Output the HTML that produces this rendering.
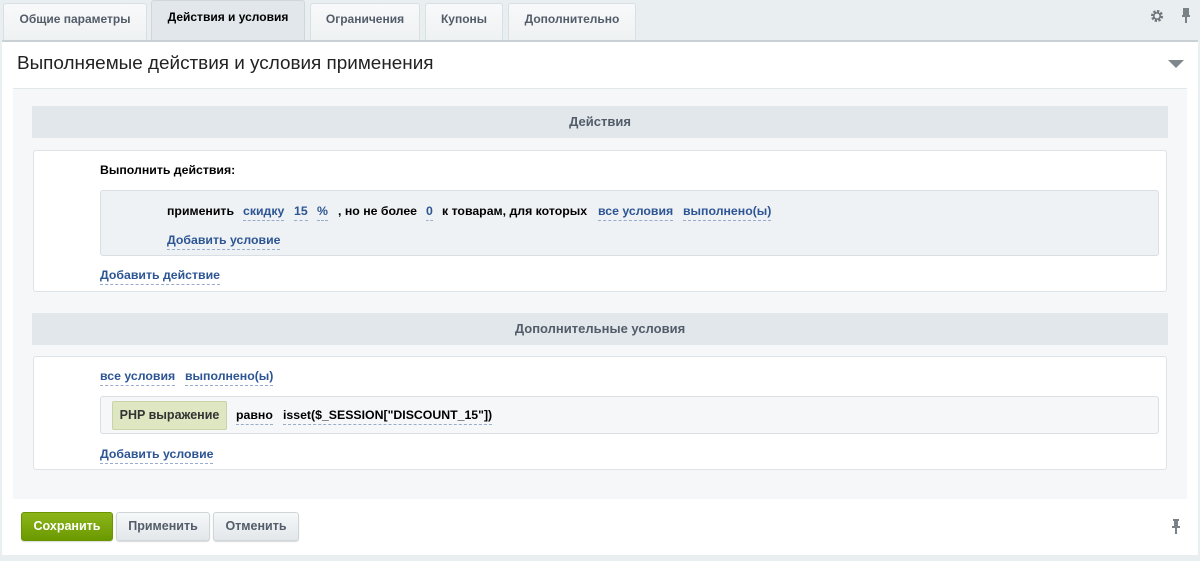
<!DOCTYPE html>
<html><head><meta charset="utf-8"><style>
*{box-sizing:border-box;margin:0;padding:0}
body{width:1200px;height:561px;background:#e9eef0;font-family:"Liberation Sans",sans-serif;position:relative;overflow:hidden;font-size:12px}
.a{position:absolute;white-space:nowrap}
.tab{position:absolute;top:3px;height:38px;background:linear-gradient(#f8f9fa,#eef1f2);border:1px solid #d9dfe2;border-bottom:none;border-radius:3px 3px 0 0;font-weight:bold;font-size:12px;color:#535c69;padding-top:8px;text-align:center}
.tab.act{background:#e1e7ea;color:#000;top:0;height:41px;padding-top:9px;border-color:#d0d7db}
.b{font-weight:bold;font-size:12.3px;color:#000}
.l{font-weight:bold;font-size:12.3px;color:#2d5594;border-bottom:1px dashed #9aaccd;padding-bottom:2px}
.hdr{position:absolute;left:32px;width:1136px;height:32px;background:#e1e7ea;text-align:center;font-weight:bold;font-size:13px;color:#535c69;line-height:31px}
.box{position:absolute;left:33px;width:1134px;background:#fff;border:1px solid #dde3e6;border-radius:3px}
.in{position:absolute;left:100px;width:1059px;background:#eef2f5;border:1px solid #d9dfe3;border-radius:3px}
.btn{position:absolute;top:512px;height:29px;border-radius:3px;font-weight:bold;font-size:12.5px;text-align:center;line-height:26px;color:#535c69;background:linear-gradient(#f6f8f9,#e2e7ea);border:1px solid #cfd6da;box-shadow:0 1px 1px rgba(0,0,0,.15)}
</style></head><body>
<div class="tab" style="left:3px;width:144px">Общие параметры</div>
<div class="tab act" style="left:151px;width:154px">Действия и условия</div>
<div class="tab" style="left:310px;width:110px">Ограничения</div>
<div class="tab" style="left:425px;width:78px">Купоны</div>
<div class="tab" style="left:508px;width:128px">Дополнительно</div>
<svg class="a" style="left:1150px;top:9px" width="14" height="14" viewBox="0 0 14 14"><circle cx="7" cy="7" r="4.5" fill="none" stroke="#6f777d" stroke-width="3" stroke-dasharray="2.2 1.3"/><circle cx="7" cy="7" r="3.2" fill="none" stroke="#6f777d" stroke-width="1.6"/></svg>
<svg class="a" style="left:1181px;top:8px" width="10" height="16" viewBox="0 0 10 16"><path d="M2 1h6M3 1v6M7 1v6M1 8h8M5 8v7" stroke="#7a8288" stroke-width="2" fill="none"/><rect x="3" y="1" width="4" height="7" fill="#7a8288"/></svg>
<div class="a" style="left:2px;top:40px;width:1196px;height:515px;background:#fff;border-top:2px solid #c9d1d5"></div>
<div class="a" style="left:17px;top:53px;font-size:18.9px;color:#222">Выполняемые действия и условия применения</div>
<div class="a" style="left:1168px;top:60px;width:0;height:0;border-left:8px solid transparent;border-right:8px solid transparent;border-top:8px solid #7f878c"></div>
<div class="a" style="left:13px;top:88px;width:1174px;height:411px;background:#f5f7f8;border-top:1px solid #e2e7ea"></div>
<div class="hdr" style="top:106px">Действия</div>
<div class="box" style="top:150px;height:142px"></div>
<div class="a b" style="left:100px;top:163px">Выполнить действия:</div>
<div class="in" style="top:190px;height:66px"></div>
<span class="a b" style="left:167px;top:204px">применить</span>
<span class="a l" style="left:243px;top:204px">скидку</span>
<span class="a l" style="left:294px;top:204px">15</span>
<span class="a l" style="left:317px;top:204px">%</span>
<span class="a b" style="left:338px;top:204px">, но не более</span>
<span class="a l" style="left:426px;top:204px">0</span>
<span class="a b" style="left:442px;top:204px">к товарам, для которых</span>
<span class="a l" style="left:598px;top:204px">все условия</span>
<span class="a l" style="left:683px;top:204px">выполнено(ы)</span>
<span class="a l" style="left:167px;top:233px">Добавить условие</span>
<span class="a l" style="left:100px;top:268px">Добавить действие</span>
<div class="hdr" style="top:313px">Дополнительные условия</div>
<div class="box" style="top:356px;height:114px"></div>
<span class="a l" style="left:100px;top:369px">все условия</span>
<span class="a l" style="left:185px;top:369px">выполнено(ы)</span>
<div class="in" style="top:396px;height:38px;background:#f5f7f8"></div>
<div class="a" style="left:112px;top:401px;width:115px;height:29px;background:#dee7c1;border:1px solid #c9d3a8;border-radius:2px;font-weight:bold;font-size:12.5px;line-height:27px;text-align:center;color:#333">PHP выражение</div>
<span class="a l" style="left:236px;top:408px;color:#000">равно</span>
<span class="a l" style="left:283px;top:408px;color:#000">isset($_SESSION["DISCOUNT_15"])</span>
<span class="a l" style="left:100px;top:447px">Добавить условие</span>
<div class="btn" style="left:21px;width:92px;background:linear-gradient(#8cb51a,#6a9a00);border-color:#6a9500;color:#fff">Сохранить</div>
<div class="btn" style="left:116px;width:94px">Применить</div>
<div class="btn" style="left:213px;width:86px">Отменить</div>
<svg class="a" style="left:1171px;top:519px" width="10" height="16" viewBox="0 0 10 16"><path d="M2 1h6M1 8h8M5 8v7" stroke="#7a8288" stroke-width="2" fill="none"/><rect x="3" y="1" width="4" height="7" fill="#7a8288"/></svg>
</body></html>
